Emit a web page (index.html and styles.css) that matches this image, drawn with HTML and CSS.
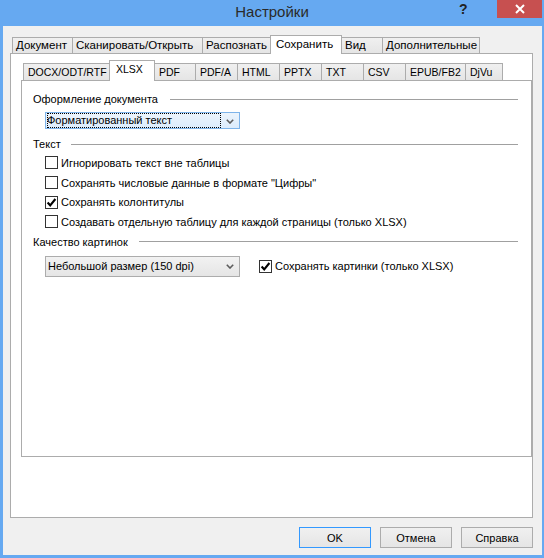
FILE: index.html
```html
<!DOCTYPE html>
<html lang="ru">

<head>
    <meta charset="UTF-8">
    <title>Настройки</title>
    <link rel="stylesheet" href="styles.css">
</head>

<body>
    <div class="window">
        <div class="titlebar">
            <span class="title">Настройки</span>
            <span class="help">?</span>
            <span class="close">
                <svg width="10" height="10" viewBox="0 0 10 10"><path d="M1 1 L9 9 M9 1 L1 9" stroke="#fff" stroke-width="2"/></svg>
            </span>
        </div>

        <div class="client">
            <!-- main tabs -->
            <div class="tabs tabs-main">
                <div class="tab w-doc">Документ</div>
                <div class="tab w-scan">Сканировать/Открыть</div>
                <div class="tab w-ocr">Распознать</div>
                <div class="tab active w-save">Сохранить</div>
                <div class="tab w-view">Вид</div>
                <div class="tab w-more">Дополнительные</div>
            </div>
            <div class="panel panel-main">
                <!-- format tabs -->
                <div class="tabs tabs-format">
                    <div class="tab w-docx">DOCX/ODT/RTF</div>
                    <div class="tab active w-xlsx">XLSX</div>
                    <div class="tab w-pdf">PDF</div>
                    <div class="tab w-pdfa">PDF/A</div>
                    <div class="tab w-html">HTML</div>
                    <div class="tab w-pptx">PPTX</div>
                    <div class="tab w-txt">TXT</div>
                    <div class="tab w-csv">CSV</div>
                    <div class="tab w-epub">EPUB/FB2</div>
                    <div class="tab w-djvu">DjVu</div>
                </div>
                <div class="panel panel-format">
                    <div class="group">
                        <span>Оформление документа</span>
                    </div>
                    <div class="row row-layout">
                        <div class="combo focused">
                            <span class="combo-text">Форматированный текст</span>
                            <svg class="chevron" width="8" height="5" viewBox="0 0 8 5"><path d="M0.8 0.8 L4 4 L7.2 0.8" fill="none" stroke="#5c5c5c" stroke-width="1.6"/></svg>
                        </div>
                    </div>

                    <div class="group group-text">
                        <span>Текст</span>
                    </div>
                    <label class="check"><span class="box"></span>Игнорировать текст вне таблицы</label>
                    <label class="check"><span class="box"></span>Сохранять числовые данные в формате "Цифры"</label>
                    <label class="check"><span class="box checked"><svg width="11" height="11" viewBox="0 0 11 11"><path d="M1.6 5.6 L4.2 8.3 L9.4 2" fill="none" stroke="#000" stroke-width="2.1"/></svg></span>Сохранять колонтитулы</label>
                    <label class="check"><span class="box"></span>Создавать отдельную таблицу для каждой страницы (только XLSX)</label>

                    <div class="group group-images">
                        <span>Качество картинок</span>
                    </div>
                    <div class="row row-images">
                        <div class="combo">
                            <span class="combo-text">Небольшой размер (150 dpi)</span>
                            <svg class="chevron" width="8" height="5" viewBox="0 0 8 5"><path d="M0.8 0.8 L4 4 L7.2 0.8" fill="none" stroke="#5c5c5c" stroke-width="1.6"/></svg>
                        </div>
                        <label class="check inline"><span class="box checked"><svg width="11" height="11" viewBox="0 0 11 11"><path d="M1.6 5.6 L4.2 8.3 L9.4 2" fill="none" stroke="#000" stroke-width="2.1"/></svg></span>Сохранять картинки (только XLSX)</label>
                    </div>
                </div>
            </div>

            <div class="buttons">
                <button class="default">OK</button>
                <button>Отмена</button>
                <button>Справка</button>
            </div>
        </div>
    </div>
</body>

</html>
```

FILE: styles.css
```css
* {
    box-sizing: border-box;
}

body {
    margin: 0;
    font-family: "Segoe UI", "Liberation Sans", Arial, sans-serif;
    font-size: 11px;
    color: #000;
}

.window {
    width: 544px;
    height: 558px;
    background-color: #66a9f1;
    display: flex;
    flex-direction: column;
}

/* title bar */
.titlebar {
    height: 26px;
    flex-shrink: 0;
    position: relative;
    display: flex;
    justify-content: center;
}

.title {
    font-size: 15px;
    color: #2a2a2a;
    line-height: 24px;
}

.help {
    position: absolute;
    left: 459px;
    top: 1px;
    font-size: 14px;
    font-weight: bold;
    color: #222;
}

.close {
    position: absolute;
    left: 497px;
    top: 0;
    width: 45px;
    height: 18px;
    background-color: #c75050;
    display: flex;
    align-items: center;
    justify-content: center;
}

/* dialog area */
.client {
    flex: 1;
    margin: 0 2px 3px 3px;
    background-color: #f0f0f0;
    padding: 9px 9px 0 7px;
    display: flex;
    flex-direction: column;
}

.tabs {
    display: flex;
    align-items: flex-end;
    position: relative;
    z-index: 1;
    padding-left: 2px;
}

.tab {
    border: 1px solid #acacac;
    border-bottom: none;
    margin-right: -1px;
    background: linear-gradient(#f0f0f0, #e5e5e5);
    white-space: nowrap;
}

.tab.active {
    background: #fff;
    margin-bottom: -1px;
}

.tabs-main {
    font-size: 11.5px;
}

.tabs-main .tab {
    height: 16px;
    line-height: 14px;
    padding-left: 3px;
}

.tabs-main .tab.active {
    height: 19px;
    line-height: 16px;
    padding-left: 5px;
}

.tabs-format {
    font-size: 10.5px;
}

.tabs-format .tab {
    height: 17px;
    line-height: 16px;
    padding-left: 4px;
}

.tabs-format .tab.active {
    height: 21px;
    line-height: 17px;
    padding-left: 6px;
}

.w-doc { width: 61px; }
.w-scan { width: 131px; }
.w-ocr { width: 69px; }
.w-save { width: 72px; }
.w-view { width: 42px; }
.w-more { width: 98px; }

.w-docx { width: 87px; }
.w-xlsx { width: 46px; }
.w-pdf { width: 42px; }
.w-pdfa { width: 43px; }
.w-html { width: 43px; }
.w-pptx { width: 43px; }
.w-txt { width: 43px; }
.w-csv { width: 43px; }
.w-epub { width: 61px; }
.w-djvu { width: 38px; }

.panel {
    background-color: #fff;
    border: 1px solid #acacac;
}

.panel-main {
    height: 465px;
    padding: 6px 0 0 10px;
}

.panel-format {
    height: 377px;
    padding: 9px 13px 0 11px;
}

/* group caption with a rule after it */
.group {
    display: flex;
    align-items: center;
    height: 18px;
}

.group::after {
    content: "";
    flex: 1;
    border-top: 1px solid #a0a0a0;
    margin-left: 12px;
}

.group-text {
    margin-top: 6px;
}

.group-text::after {
    margin-left: 10px;
}

.group-images {
    margin-top: 1px;
}

.group-images::after {
    margin-left: 11px;
}

.row {
    display: flex;
    align-items: center;
    padding-left: 12px;
}

.row-layout {
    margin-top: 4px;
}

.row-images {
    margin-top: 5px;
}

.combo {
    width: 195px;
    height: 21px;
    border: 1px solid #acacac;
    background: linear-gradient(#f2f2f2, #e5e5e5);
    display: flex;
    align-items: center;
    position: relative;
}

.combo.focused {
    height: 17px;
    border-color: #7eb4ea;
    background: linear-gradient(#ecf4fc, #dcecfc);
}

.combo-text {
    flex: 1;
    padding-left: 2px;
}

.combo.focused .combo-text {
    margin: 0 18px 0 1px;
    padding-left: 0;
    outline: 1px dotted #000;
    outline-offset: -1px;
    line-height: 15px;
}

.chevron {
    position: absolute;
    right: 5px;
    top: 50%;
    margin-top: -2px;
}

.check {
    display: flex;
    align-items: center;
    height: 19.7px;
    padding-left: 12px;
}

.check.inline {
    padding-left: 19px;
}

.box {
    width: 13px;
    height: 13px;
    border: 1px solid #333;
    background-color: #fff;
    margin-right: 3px;
    display: flex;
}

.buttons {
    display: flex;
    justify-content: flex-end;
    gap: 9px;
    margin-top: 9px;
}

button {
    width: 72px;
    height: 21px;
    font-family: inherit;
    font-size: 11px;
    border: 1px solid #acacac;
    background: linear-gradient(#f0f0f0, #e5e5e5);
    padding: 0;
}

button.default {
    border-color: #3399ff;
}
```
